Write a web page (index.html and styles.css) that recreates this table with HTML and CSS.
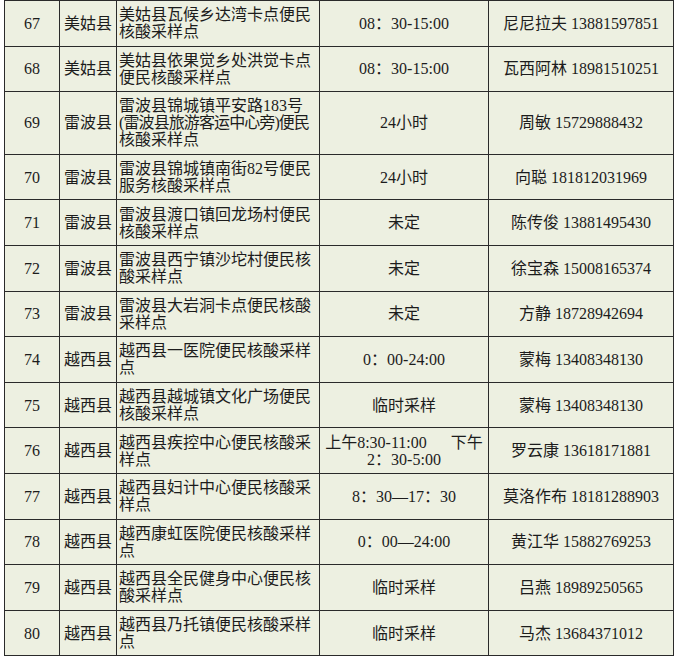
FILE: index.html
```html
<!DOCTYPE html>
<html lang="zh-CN">
<head>
<meta charset="utf-8">
<title>便民核酸采样点</title>
<link rel="stylesheet" href="styles.css">
</head>
<body>
<table class="sites">
  <colgroup>
    <col class="c-no"><col class="c-county"><col class="c-name"><col class="c-time"><col class="c-contact">
  </colgroup>
  <tbody>
    <tr><td class="no">67</td><td class="county">美姑县</td><td class="name">美姑县瓦候乡达湾卡点便民<br>核酸采样点</td><td class="time">08：30-15:00</td><td class="contact">尼尼拉夫 13881597851</td></tr>
    <tr><td class="no">68</td><td class="county">美姑县</td><td class="name">美姑县依果觉乡处洪觉卡点<br>便民核酸采样点</td><td class="time">08：30-15:00</td><td class="contact">瓦西阿林 18981510251</td></tr>
    <tr><td class="no">69</td><td class="county">雷波县</td><td class="name">雷波县锦城镇平安路183号<br><span class="tight">(雷波县旅游客运中心旁)便民</span><br>核酸采样点</td><td class="time">24小时</td><td class="contact">周敏 15729888432</td></tr>
    <tr><td class="no">70</td><td class="county">雷波县</td><td class="name">雷波县锦城镇南街82号便民<br>服务核酸采样点</td><td class="time">24小时</td><td class="contact">向聪 181812031969</td></tr>
    <tr><td class="no">71</td><td class="county">雷波县</td><td class="name">雷波县渡口镇回龙场村便民<br>核酸采样点</td><td class="time">未定</td><td class="contact">陈传俊 13881495430</td></tr>
    <tr><td class="no">72</td><td class="county">雷波县</td><td class="name">雷波县西宁镇沙坨村便民核<br>酸采样点</td><td class="time">未定</td><td class="contact">徐宝森 15008165374</td></tr>
    <tr><td class="no">73</td><td class="county">雷波县</td><td class="name">雷波县大岩洞卡点便民核酸<br>采样点</td><td class="time">未定</td><td class="contact">方静 18728942694</td></tr>
    <tr><td class="no">74</td><td class="county">越西县</td><td class="name">越西县一医院便民核酸采样<br>点</td><td class="time">0：00-24:00</td><td class="contact">蒙梅 13408348130</td></tr>
    <tr><td class="no">75</td><td class="county">越西县</td><td class="name">越西县越城镇文化广场便民<br>核酸采样点</td><td class="time">临时采样</td><td class="contact">蒙梅 13408348130</td></tr>
    <tr><td class="no">76</td><td class="county">越西县</td><td class="name">越西县疾控中心便民核酸采<br>样点</td><td class="time">上午8:30-11:00<span class="gap"></span>下午<br>2：30-5:00</td><td class="contact">罗云康 13618171881</td></tr>
    <tr><td class="no">77</td><td class="county">越西县</td><td class="name">越西县妇计中心便民核酸采<br>样点</td><td class="time">8：30—17：30</td><td class="contact">莫洛作布 18181288903</td></tr>
    <tr><td class="no">78</td><td class="county">越西县</td><td class="name">越西康虹医院便民核酸采样<br>点</td><td class="time">0：00—24:00</td><td class="contact">黄江华 15882769253</td></tr>
    <tr><td class="no">79</td><td class="county">越西县</td><td class="name">越西县全民健身中心便民核<br>酸采样点</td><td class="time">临时采样</td><td class="contact">吕燕 18989250565</td></tr>
    <tr><td class="no">80</td><td class="county">越西县</td><td class="name">越西县乃托镇便民核酸采样<br>点</td><td class="time">临时采样</td><td class="contact">马杰 13684371012</td></tr>
  </tbody>
</table>
</body>
</html>
```

FILE: styles.css
```css
html, body {
  margin: 0;
  padding: 0;
  background: #ffffff;
}

body {
  font-family: "Liberation Serif", "Noto Sans CJK SC", serif;
  font-size: 16px;
  color: #1c1c1c;
}

.sites {
  margin-left: 4px;
  width: 670px;
  table-layout: fixed;
  border-collapse: collapse;
  background: #edf0e1;
}

.c-no { width: 55px; }
.c-county { width: 57px; }
.c-name { width: 203px; }
.c-time { width: 169px; }
.c-contact { width: 185px; }

.sites td {
  border: 1px solid #2a2a2a;
  padding: 5.3px 2px;
  line-height: 17px;
  vertical-align: middle;
  white-space: nowrap;
  overflow: hidden;
}

.sites td.no,
.sites td.county,
.sites td.time,
.sites td.contact {
  text-align: center;
}

.sites td.name {
  text-align: left;
}

.tight {
  letter-spacing: -0.9px;
}

.gap {
  display: inline-block;
  width: 24px;
}
```
